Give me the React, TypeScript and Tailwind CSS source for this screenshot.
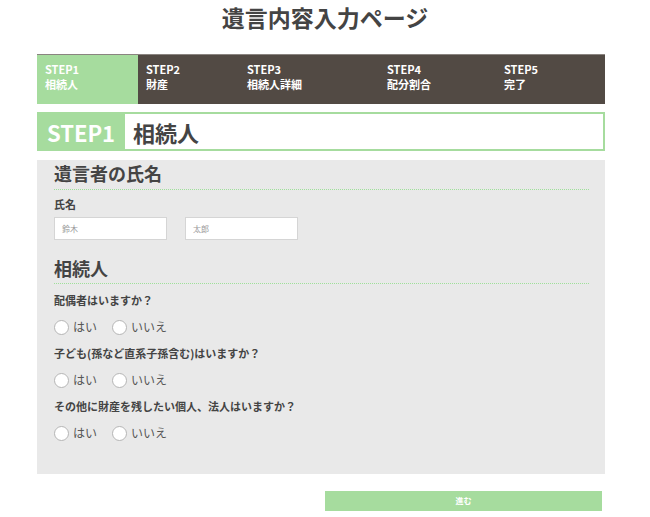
import React from 'react';

const steps = [
  { no: 'STEP1', name: '相続人', w: 'w-[101px]', active: true },
  { no: 'STEP2', name: '財産', w: 'w-[101px]', active: false },
  { no: 'STEP3', name: '相続人詳細', w: 'w-[140px]', active: false },
  { no: 'STEP4', name: '配分割合', w: 'w-[117px]', active: false },
  { no: 'STEP5', name: '完了', w: 'flex-1', active: false },
];

const questions = [
  '配偶者はいますか？',
  '子ども(孫など直系子孫含む)はいますか？',
  'その他に財産を残したい個人、法人はいますか？',
];

function Radio({ label }: { label: string }) {
  return (
    <label className="flex items-center gap-[4px]">
      <span className="w-[15px] h-[15px] rounded-full bg-white border border-[#b5b5b5]" />
      <span className="text-[12px] text-[#555]">{label}</span>
    </label>
  );
}

export default function App() {
  return (
    <div className="w-[650px] bg-white text-[#444]" style={{ fontFamily: '"Noto Sans CJK JP", "Noto Sans", sans-serif' }}>
      <h1 className="text-center text-[23px] font-bold leading-none pt-[6px] text-[#444]">遺言内容入力ページ</h1>

      <div className="mx-[37px] w-[568px] mt-[25px]">
        {/* Step bar */}
        <div className="flex h-[50px] bg-[#524a44] border-t border-[#8a8480]">
          {steps.map((s) => (
            <div
              key={s.no}
              className={`${s.w} ${s.active ? 'bg-[#a6dc9e]' : ''} pl-[8px] pt-[7px] text-white text-[11px] font-bold leading-[15px]`}
            >
              <div>{s.no}</div>
              <div>{s.name}</div>
            </div>
          ))}
        </div>

        {/* Step heading */}
        <div className="flex items-stretch h-[39px] mt-[8px] border-2 border-[#a6dc9e] border-l-0">
          <div className="w-[88px] bg-[#a6dc9e] text-white text-[22px] font-bold flex items-center justify-center leading-none">STEP1</div>
          <div className="pl-[8px] text-[22px] font-bold flex items-center leading-none text-[#444]">相続人</div>
        </div>

        {/* Form panel */}
        <div className="mt-[9px] bg-[#e9e9e9] h-[314px] pl-[17px] pr-[16px] pt-[1px]">
          <h2 className="text-[18px] font-bold leading-[24px] pb-[4px] border-b border-dotted border-[#9fe09a]">遺言者の氏名</h2>
          <div className="text-[11px] font-bold mt-[6px] leading-[16px]">氏名</div>
          <div className="flex gap-[18px] mt-[5px]">
            <div className="w-[113px] h-[23px] bg-white border border-[#d5d5d5] text-[8px] text-[#999] flex items-center pl-[7px]">鈴木</div>
            <div className="w-[113px] h-[23px] bg-white border border-[#d5d5d5] text-[8px] text-[#999] flex items-center pl-[7px]">太郎</div>
          </div>

          <h2 className="text-[18px] font-bold leading-[24px] pb-[3px] mt-[16px] border-b border-dotted border-[#9fe09a]">相続人</h2>
          <div className="flex flex-col">
            {questions.map((q) => (
              <div key={q} className="flex flex-col">
                <div className="text-[11px] font-bold leading-[16px] mt-[8px]">{q}</div>
                <div className="flex gap-[15px] mt-[10px] mb-[1px]">
                  <Radio label="はい" />
                  <Radio label="いいえ" />
                </div>
              </div>
            ))}
          </div>
        </div>

        {/* Submit */}
        <div className="flex justify-end pr-[3px] mt-[17px]">
          <button className="w-[277px] h-[20px] bg-[#a6dc9e] text-white text-[8px] font-bold flex items-center justify-center">進む</button>
        </div>
      </div>
    </div>
  );
}
